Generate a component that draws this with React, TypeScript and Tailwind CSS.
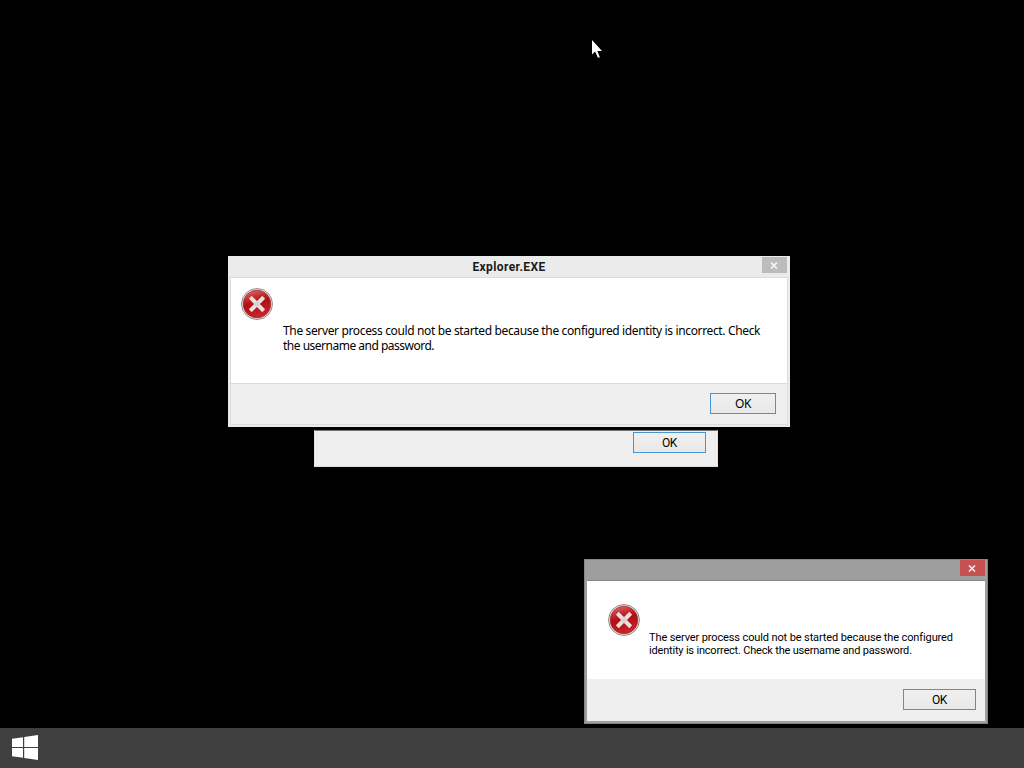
import type { ReactNode } from 'react'

const MESSAGE_EXPLORER = [
  {
    text: 'The server process could not be started because the configured identity is incorrect. Check',
    tracking: 'tracking-[-0.355px]',
  },
  { text: 'the username and password.', tracking: 'tracking-[-0.5px]' },
]

const MESSAGE_SYSTEM = [
  {
    text: 'The server process could not be started because the configured',
    tracking: 'tracking-[-0.12px]',
  },
  {
    text: 'identity is incorrect. Check the username and password.',
    tracking: 'tracking-[-0.19px]',
  },
]

function ErrorIcon() {
  return (
    <svg width="32" height="32" viewBox="0 0 32 32" className="shrink-0">
      <defs>
        <linearGradient id="errorFill" x1="0" y1="0" x2="0.3" y2="1">
          <stop offset="0" stopColor="#dc7a7a" />
          <stop offset="0.35" stopColor="#c62a30" />
          <stop offset="0.55" stopColor="#b00d14" />
          <stop offset="1" stopColor="#c8232a" />
        </linearGradient>
      </defs>
      <circle cx="16" cy="16" r="15.5" fill="#e6dedc" stroke="#8f8684" strokeWidth="0.9" />
      <circle cx="16" cy="16" r="13.8" fill="url(#errorFill)" stroke="#a5252a" strokeWidth="0.7" />
      <path d="M9.4 9.4 22.6 22.6M22.6 9.4 9.4 22.6" stroke="#9c1a1e" strokeWidth="5.2" />
      <path d="M9.3 9.3 22.7 22.7M22.7 9.3 9.3 22.7" stroke="#f0dfd8" strokeWidth="4.1" />
      <path d="M14 14 18 18M18 14 14 18" stroke="#d6d1d4" strokeWidth="3" />
    </svg>
  )
}

function CloseButton({ active = false }: { active?: boolean }) {
  return (
    <button
      aria-label="Close"
      className={`flex h-4 w-[25px] items-center justify-center pr-px ${active ? 'bg-[#c75050]' : 'bg-[#bcbcbc]'}`}
    >
      <svg width="8" height="7" viewBox="0 0 8 7">
        <path d="M1 0.5 7 6.5M7 0.5 1 6.5" stroke={active ? '#f6e6e6' : '#f4f4f4'} strokeWidth="1.7" />
      </svg>
    </button>
  )
}

function OkButton({ className, children = 'OK' }: { className: string; children?: ReactNode }) {
  return (
    <button
      className={`flex h-[21px] items-center justify-center border border-[#4a94d0] bg-linear-to-b from-[#f0f0f0] to-[#e8e8e8] ${className}`}
    >
      {children}
    </button>
  )
}

function ExplorerDialog() {
  return (
    <section className="absolute left-[228px] top-[256px] flex h-[171px] w-[562px] flex-col bg-[#ebebeb] px-[2px] pb-[2px] font-['Noto_Sans','Open_Sans',sans-serif] text-xs text-black">
      <header className="flex h-[21px] items-start pt-px pr-px">
        <div className="w-[26px]" />
        <h1 className="flex-1 text-center font-['Roboto',sans-serif] text-[12px] leading-5 font-bold tracking-[0.4px] text-[#1a1a1a]">Explorer.EXE</h1>
        <CloseButton />
      </header>
      <div className="flex flex-1 flex-col border border-[#dcdcdc] bg-white">
        <div className="flex flex-1 pt-[10px] pl-[10px]">
          <ErrorIcon />
          <div className="pt-[35px] pl-[10px] leading-[15px] whitespace-nowrap">
            {MESSAGE_EXPLORER.map(({ text, tracking }) => (
              <p key={text} className={tracking}>{text}</p>
            ))}
          </div>
        </div>
        <footer className="flex h-[41px] justify-end border-t border-[#dcdcdc] bg-[#efefef] pt-[9px] pr-[11px]">
          <OkButton className="w-[66px] tracking-[-0.5px]" />
        </footer>
      </div>
    </section>
  )
}

// Only the bottom strip is visible below the Explorer dialog
function HiddenDialog() {
  return (
    <section className="absolute left-[314px] top-[430px] flex h-[37px] w-[404px] justify-end border border-t-[#777777] border-r-[#e4e4e4] border-b-[#dcdcdc] border-l-[#e4e4e4] bg-[#efefef] pt-px pr-[11px] font-['Roboto',sans-serif] text-[12px] text-black">
      <OkButton className="w-[73px] tracking-[-0.4px]" />
    </section>
  )
}

function SystemDialog() {
  return (
    <section className="absolute left-[584px] top-[559px] flex h-[165px] w-[404px] flex-col border border-[#868686] bg-[#9e9e9e] px-[2px] pb-[2px] font-['Roboto',sans-serif] text-[11px] text-black">
      <header className="flex h-[21px] items-start justify-end border-b border-[#868686]">
        <CloseButton active />
      </header>
      <div className="flex flex-1 flex-col bg-white">
        <div className="flex flex-1 pt-[23px] pl-[21px]">
          <ErrorIcon />
          <div className="pt-[27px] pl-[9px] leading-[13px] whitespace-nowrap">
            {MESSAGE_SYSTEM.map(({ text, tracking }) => (
              <p key={text} className={tracking}>{text}</p>
            ))}
          </div>
        </div>
        <footer className="flex h-[42px] justify-end bg-[#efefef] pt-[10px] pr-[9px]">
          <OkButton className="w-[73px] text-[12px] tracking-[-0.4px]" />
        </footer>
      </div>
    </section>
  )
}

function Taskbar() {
  return (
    <nav className="flex h-10 items-center bg-[#3f3f3f] pl-3">
      <svg width="27" height="26" viewBox="0 0 27 26" fill="#ffffff">
        <path d="M0 3.7 11 2.2V12H0zM12.2 2 26 0V12H12.2zM0 13.1H11V22.8L0 21.3zM12.2 13.1H26V25L12.2 23z" />
      </svg>
    </nav>
  )
}

function Cursor() {
  return (
    <svg className="absolute left-[591px] top-[39px]" width="13" height="20" viewBox="0 0 13 20">
      <path d="M1 1V15.5L4.1 12.6 6.8 18.6H8.9L6.4 12H11z" fill="#ffffff" />
    </svg>
  )
}

export default function App() {
  return (
    <main className="relative flex h-[768px] w-[1024px] flex-col justify-end overflow-hidden bg-black">
      <HiddenDialog />
      <ExplorerDialog />
      <SystemDialog />
      <Cursor />
      <Taskbar />
    </main>
  )
}
